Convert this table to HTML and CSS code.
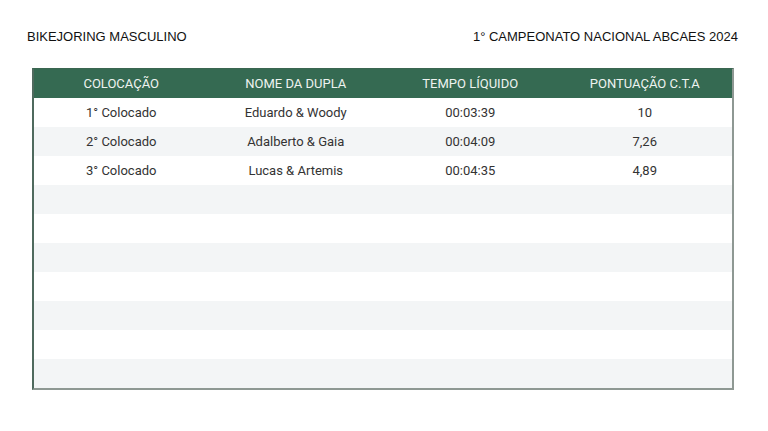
FILE: index.html
```html
<!DOCTYPE html>
<html lang="pt">
<head>
<meta charset="utf-8">
<link rel="stylesheet" href="styles.css">
</head>
<body>
<div class="page">
  <div class="top">
    <span class="title">BIKEJORING MASCULINO</span>
    <span class="title">1° CAMPEONATO NACIONAL ABCAES 2024</span>
  </div>
  <div class="table">
    <div class="row head">
      <div class="cell">COLOCAÇÃO</div>
      <div class="cell">NOME DA DUPLA</div>
      <div class="cell">TEMPO LÍQUIDO</div>
      <div class="cell">PONTUAÇÃO C.T.A</div>
    </div>
    <div class="row">
      <div class="cell">1° Colocado</div>
      <div class="cell">Eduardo &amp; Woody</div>
      <div class="cell">00:03:39</div>
      <div class="cell">10</div>
    </div>
    <div class="row alt">
      <div class="cell">2° Colocado</div>
      <div class="cell">Adalberto &amp; Gaia</div>
      <div class="cell">00:04:09</div>
      <div class="cell">7,26</div>
    </div>
    <div class="row">
      <div class="cell">3° Colocado</div>
      <div class="cell">Lucas &amp; Artemis</div>
      <div class="cell">00:04:35</div>
      <div class="cell">4,89</div>
    </div>
    <div class="row alt"></div>
    <div class="row"></div>
    <div class="row alt"></div>
    <div class="row"></div>
    <div class="row alt"></div>
    <div class="row"></div>
    <div class="row alt"></div>
  </div>
</div>
</body>
</html>
```

FILE: styles.css
```css
html, body {
  margin: 0;
  padding: 0;
  background: #ffffff;
}
.page {
  width: 768px;
  height: 431px;
  padding: 28px 0 0 0;
  box-sizing: border-box;
}
.top {
  display: flex;
  justify-content: space-between;
  padding: 0 30px 0 27px;
  height: 16px;
  align-items: center;
}
.title {
  font-family: "Liberation Sans", Arial, sans-serif;
  font-size: 13px;
  color: #111;
}
.table {
  margin: 24px 0 0 32px;
  width: 702px;
  box-sizing: border-box;
  border-left: 2px solid #4f6a5e;
  border-right: 2px solid #8e9893;
  border-bottom: 2px solid #8e9893;
  border-top: 1px solid #3a6650;
}
.row {
  display: grid;
  grid-template-columns: repeat(4, 1fr);
  height: 29px;
  background: #ffffff;
}
.row.alt {
  background: #f3f5f6;
}
.row.head {
  background: #356a52;
  height: 29px;
}
.cell {
  display: flex;
  align-items: center;
  justify-content: center;
  font-family: Roboto, "Noto Sans", sans-serif;
  font-size: 13px;
  color: #333;
}
.head .cell {
  color: #eef3f0;
}
```
